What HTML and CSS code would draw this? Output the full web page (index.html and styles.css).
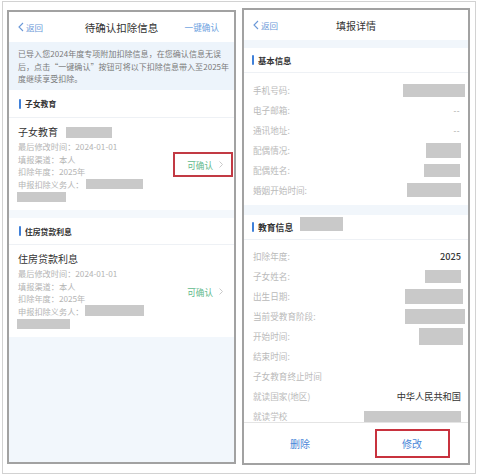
FILE: index.html
```html
<!DOCTYPE html>
<html lang="zh-CN">
<head>
<meta charset="utf-8">
<title>待确认扣除信息 / 填报详情</title>
<link rel="stylesheet" href="styles.css">
</head>
<body>
<div class="frame">
  <div class="phone phone-left">
    <div class="nav">
      <span class="back"><svg width="6" height="10" viewBox="0 0 6 10"><path d="M5 1L1 5l4 4" fill="none" stroke="#6a98d8" stroke-width="1.1"/></svg>返回</span>
      <span class="nav-title">待确认扣除信息</span>
      <span class="nav-action">一键确认</span>
    </div>
    <div class="notice">
      <span>已导入您2024年度专项附加扣除信息，在您确认信息无误</span>
      <span>后，点击“一键确认”按钮可将以下扣除信息带入至2025年</span>
      <span>度继续享受扣除。</span>
    </div>
    <div class="sec-head"><i class="bar"></i>子女教育</div>
    <div class="item">
      <div class="item-info">
        <div class="item-title">子女教育<span class="rx rx-t1"></span></div>
        <div class="meta">最后修改时间：2024-01-01</div>
        <div class="meta">填报渠道：本人</div>
        <div class="meta">扣除年度：2025年</div>
        <div class="meta">申报扣除义务人：<span class="rx rx-m1"></span></div>
        <div class="meta-box"><span class="rx rx-m2"></span></div>
      </div>
      <span class="confirm flagged">可确认<svg width="4" height="7" viewBox="0 0 4 7"><path d="M.5.5l3 3-3 3" fill="none" stroke="#c4c4c4" stroke-width="0.9"/></svg></span>
    </div>
    <div class="gap"></div>
    <div class="sec-head sec-head-2"><i class="bar"></i>住房贷款利息</div>
    <div class="item">
      <div class="item-info">
        <div class="item-title">住房贷款利息</div>
        <div class="meta">最后修改时间：2024-01-01</div>
        <div class="meta">填报渠道：本人</div>
        <div class="meta">扣除年度：2025年</div>
        <div class="meta">申报扣除义务人：<span class="rx rx-m3"></span></div>
        <div class="meta-box"><span class="rx rx-m4"></span></div>
      </div>
      <span class="confirm">可确认<svg width="4" height="7" viewBox="0 0 4 7"><path d="M.5.5l3 3-3 3" fill="none" stroke="#c4c4c4" stroke-width="0.9"/></svg></span>
    </div>
    <div class="fill"></div>
  </div>

  <div class="phone phone-right">
    <div class="scroll">
      <div class="nav nav-r">
        <span class="back"><svg width="6" height="10" viewBox="0 0 6 10"><path d="M5 1L1 5l4 4" fill="none" stroke="#6a98d8" stroke-width="1.1"/></svg>返回</span>
        <span class="nav-title">填报详情</span>
        <span></span>
      </div>
      <div class="band band-1"></div>
      <div class="sec-head sec-r"><i class="bar"></i>基本信息</div>
      <div class="rows rows-1">
        <div class="row"><span class="lbl">手机号码:</span><span class="rx rx-a"></span></div>
        <div class="row"><span class="lbl">电子邮箱:</span><span class="dash">--</span></div>
        <div class="row"><span class="lbl">通讯地址:</span><span class="dash">--</span></div>
        <div class="row"><span class="lbl">配偶情况:</span><span class="rx rx-b"></span></div>
        <div class="row"><span class="lbl">配偶姓名:</span><span class="rx rx-c"></span></div>
        <div class="row"><span class="lbl">婚姻开始时间:</span><span class="rx rx-d"></span></div>
      </div>
      <div class="band band-2"></div>
      <div class="sec-head sec-r sec-r2"><i class="bar"></i>教育信息<span class="rx rx-e"></span></div>
      <div class="rows rows-2">
        <div class="row"><span class="lbl">扣除年度:</span><span class="val val-num">2025</span></div>
        <div class="row"><span class="lbl">子女姓名:</span><span class="rx rx-f"></span></div>
        <div class="row"><span class="lbl">出生日期:</span><span class="rx rx-g"></span></div>
        <div class="row"><span class="lbl">当前受教育阶段:</span><span class="rx rx-h"></span></div>
        <div class="row"><span class="lbl">开始时间:</span><span class="rx rx-i"></span></div>
        <div class="row"><span class="lbl">结束时间:</span><span></span></div>
        <div class="row"><span class="lbl">子女教育终止时间</span><span></span></div>
        <div class="row"><span class="lbl">就读国家(地区)</span><span class="val">中华人民共和国</span></div>
        <div class="row"><span class="lbl">就读学校</span><span class="rx rx-j"></span></div>
      </div>
    </div>
    <div class="footer">
      <div class="fbtn"><span class="fbtn-text">删除</span></div>
      <div class="fbtn"><span class="fbtn-text flagged-btn">修改</span></div>
    </div>
  </div>
</div>
</body>
</html>
```

FILE: styles.css
```css
* { box-sizing: border-box; }
body {
  margin: 0;
  background: #fff;
  font-family: "Noto Sans CJK SC", "Noto Sans", sans-serif;
  color: #333;
}
.frame {
  width: 474px;
  height: 473px;
  margin: 1px 0 0 2px;
  border: 1px solid #d2d2d2;
  display: flex;
  align-items: flex-start;
  padding-left: 4px;
  gap: 6px;
}
.phone {
  border: 2px solid #a2a2a2;
  background: #fff;
  display: flex;
  flex-direction: column;
  overflow: hidden;
}
.phone-left { width: 229px; height: 454px; margin-top: 8px; }
.phone-right { width: 228px; height: 457px; margin-top: 6px; }

/* nav */
.nav {
  height: 30px;
  flex: none;
  display: grid;
  grid-template-columns: 1fr auto 1fr;
  align-items: center;
  padding: 0 9px;
  background: #fff;
}
.back {
  display: inline-flex;
  align-items: center;
  gap: 2px;
  font-size: 8.5px;
  color: #6a98d8;
  justify-self: start;
}
.nav-title { font-size: 10.5px; color: #333; }
.nav-action {
  justify-self: end;
  font-size: 8.6px;
  color: #6c9fe0;
  margin-right: 6px;
}
.nav-r { padding: 0 9px; }
.nav-r .nav-title { font-size: 10px; }

/* notice */
.notice {
  height: 48px;
  flex: none;
  background: #edf4fb;
  padding: 6px 9px 0;
  font-size: 8px;
  line-height: 12.6px;
  color: #7a7a7a;
  display: flex;
  flex-direction: column;
  white-space: nowrap;
  letter-spacing: 0.05px;
}

/* section heads */
.sec-head {
  height: 28px;
  flex: none;
  display: flex;
  align-items: center;
  gap: 4px;
  padding-left: 10px;
  font-size: 7.8px;
  font-weight: 700;
  color: #333;
  border-bottom: 1px solid #eef1f5;
}
.sec-head-2 { height: 27px; }
.bar {
  display: block;
  width: 2px;
  height: 10px;
  background: #3f80d9;
  border-radius: 1px;
}

/* items */
.item {
  height: 92px;
  flex: none;
  display: flex;
  align-items: center;
  justify-content: space-between;
  padding: 0 1px 0 9px;
}
.item-info {
  align-self: flex-start;
  padding-top: 6px;
}
.item-title {
  font-size: 10px;
  line-height: 16px;
  color: #333;
  display: flex;
  align-items: center;
  gap: 8px;
}
.meta {
  font-size: 8.2px;
  line-height: 12.5px;
  color: #b4b4b4;
  display: flex;
  align-items: center;
  white-space: nowrap;
}
.meta-box { height: 12.5px; display: flex; align-items: center; padding-top: 2px; }
.confirm {
  display: inline-flex;
  align-items: center;
  gap: 6px;
  height: 25px;
  padding: 0 8px 0 12px;
  border: 2px solid transparent;
  font-size: 8.6px;
  color: #5fb98b;
  margin-top: 1px;
}
.flagged { border-color: #c23a44; }
.gap { height: 8px; flex: none; background: #f4f8fc; }
.fill { flex: 1; background: #f2f7fc; }

/* redactions */
.rx { display: inline-block; background: #c9c9c9; flex: none; }
.rx-t1 { width: 46px; height: 11px; }
.rx-m1 { width: 57px; height: 10px; margin-left: 2px; }
.rx-m2 { width: 49px; height: 10px; margin-left: -1px; }
.rx-m3 { width: 59px; height: 11px; margin-left: 1px; }
.rx-m4 { width: 53px; height: 10px; margin-left: -1px; }
.rx-a { width: 62px; height: 13px; }
.rx-b { width: 35px; height: 15px; margin-right: 4px; }
.rx-c { width: 36px; height: 13px; margin-right: 5px; }
.rx-d { width: 54px; height: 14px; margin-right: 4px; }
.rx-e { width: 43px; height: 14px; margin-left: 3px; margin-top: -6px; }
.rx-f { width: 36px; height: 13px; margin-right: 4px; }
.rx-g { width: 58px; height: 15px; margin-right: 2px; }
.rx-h { width: 60px; height: 15px; }
.rx-i { width: 44px; height: 17px; margin-right: 2px; }
.rx-j { width: 97px; height: 11px; margin-right: 4px; }

/* right phone */
.scroll {
  flex: 1;
  min-height: 0;
  overflow: hidden;
  display: flex;
  flex-direction: column;
}
.band { flex: none; background: #f1f6fb; }
.band-1 { height: 8px; }
.band-2 { height: 10px; }
.sec-r { height: 25px; padding-left: 8px; font-size: 8.4px; }
.sec-r2 { font-size: 8.8px; }
.rows { flex: none; padding: 0 3px 0 9px; }
.rows-1 { padding-top: 7px; padding-bottom: 5px; }
.rows-2 { padding-top: 6px; }
.row {
  height: 20px;
  display: flex;
  align-items: center;
  justify-content: space-between;
}
.lbl { font-size: 8.6px; color: #bababa; white-space: nowrap; }
.dash { font-size: 8px; color: #999; margin-right: 5px; letter-spacing: 0.5px; }
.val { font-size: 9.2px; color: #333; margin-right: 4px; }
.val-num { font-weight: 500; margin-right: 4px; }

.footer {
  height: 41px;
  flex: none;
  border-top: 1px solid #e4e4e4;
  display: flex;
  background: #fff;
}
.fbtn {
  flex: 1;
  display: flex;
  align-items: center;
  justify-content: center;
}
.fbtn-text {
  width: 75px;
  height: 29px;
  display: flex;
  align-items: center;
  justify-content: center;
  font-size: 10px;
  color: #4a86d8;
  border: 2px solid transparent;
}
.flagged-btn { border-color: #c8323e; }
```
